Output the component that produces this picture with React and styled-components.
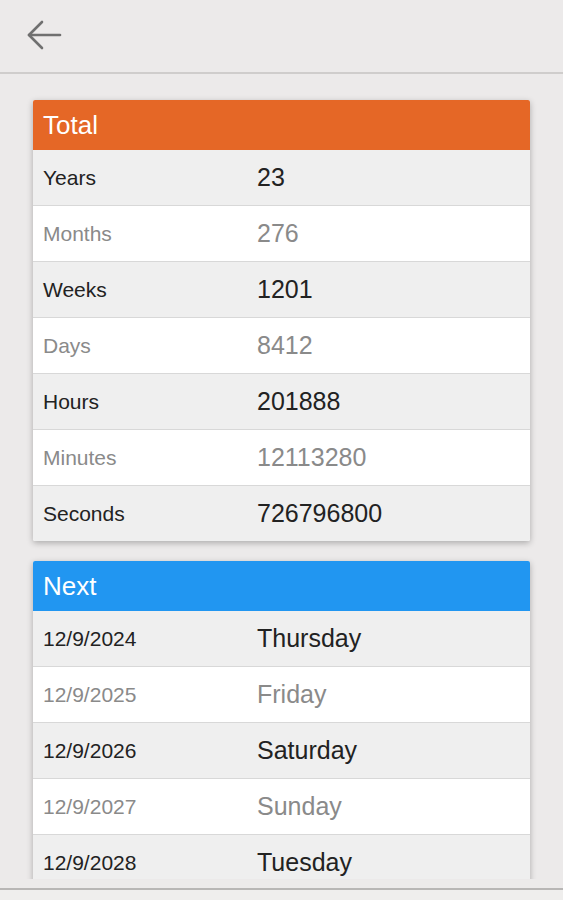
import React from 'react'
import styled, { createGlobalStyle } from 'styled-components'

const totals = [
    ['Years', '23'],
    ['Months', '276'],
    ['Weeks', '1201'],
    ['Days', '8412'],
    ['Hours', '201888'],
    ['Minutes', '12113280'],
    ['Seconds', '726796800'],
]

const next = [
    ['12/9/2024', 'Thursday'],
    ['12/9/2025', 'Friday'],
    ['12/9/2026', 'Saturday'],
    ['12/9/2027', 'Sunday'],
    ['12/9/2028', 'Tuesday'],
]

function Card({ title, color, rows }) {
    return (
        <Panel>
            <PanelHead color={color}>{title}</PanelHead>
            {rows.map(([label, value], i) => (
                <Row key={label} odd={i % 2 === 1}>
                    <Label>{label}</Label>
                    <Value>{value}</Value>
                </Row>
            ))}
        </Panel>
    )
}

export default function App() {
    return (
        <>
            <GlobalStyle />
            <Screen>
                <TopBar>
                    <BackButton aria-label="back">
                        <svg width="36" height="30" viewBox="0 0 36 30" fill="none">
                            <path d="M3 15H34" stroke="#707070" strokeWidth="2.6" strokeLinecap="round" />
                            <path d="M16 2L3 15L16 28" stroke="#707070" strokeWidth="2.6" strokeLinecap="round" strokeLinejoin="round" />
                        </svg>
                    </BackButton>
                </TopBar>
                <Content>
                    <Card title="Total" color="#e56726" rows={totals} />
                    <Card title="Next" color="#2196f1" rows={next} />
                </Content>
                <BottomBar />
            </Screen>
        </>
    )
}

const GlobalStyle = createGlobalStyle`
    html, body {
        margin: 0;
        padding: 0;
        background: #eceaea;
        font-family: "Liberation Sans", Arial, sans-serif;
    }
`

const Screen = styled.div`
    height: 900px;
    display: flex;
    flex-direction: column;
    background: #eceaea;
    overflow: hidden;
`

const TopBar = styled.div`
    flex: none;
    display: flex;
    align-items: center;
    padding-left: 26px;
    border-bottom: 2px solid #cfcdcc;
    box-sizing: border-box;
    height: 74px;
`

const BackButton = styled.div`
    display: flex;
    align-items: center;
    margin-top: -2px;
`

const Content = styled.div`
    flex: 1;
    overflow: hidden;
    padding: 26px 33px 0;
    display: flex;
    flex-direction: column;
    gap: 20px;
    margin-bottom: 9px;
`

const Panel = styled.div`
    flex: none;
    background: #fff;
    border-radius: 2px;
    box-shadow: 0 2px 6px rgba(0, 0, 0, 0.28);
    overflow: hidden;
`

const PanelHead = styled.div`
    height: 50px;
    background: ${p => p.color};
    color: #fff;
    font-size: 26px;
    display: flex;
    align-items: center;
    padding-left: 10px;
`

const Row = styled.div`
    height: 55px;
    display: flex;
    align-items: center;
    padding-left: 10px;
    background: ${p => (p.odd ? '#ffffff' : '#efefef')};
    color: ${p => (p.odd ? '#8a8a8a' : '#222222')};
    & + & {
        border-top: 1px solid #d8d8d8;
    }
`

const Label = styled.div`
    width: 214px;
    font-size: 21px;
`

const Value = styled.div`
    font-size: 25px;
`

const BottomBar = styled.div`
    flex: none;
    height: 10px;
    border-top: 2px solid #b8b6b5;
    background: #efeeed;
`
